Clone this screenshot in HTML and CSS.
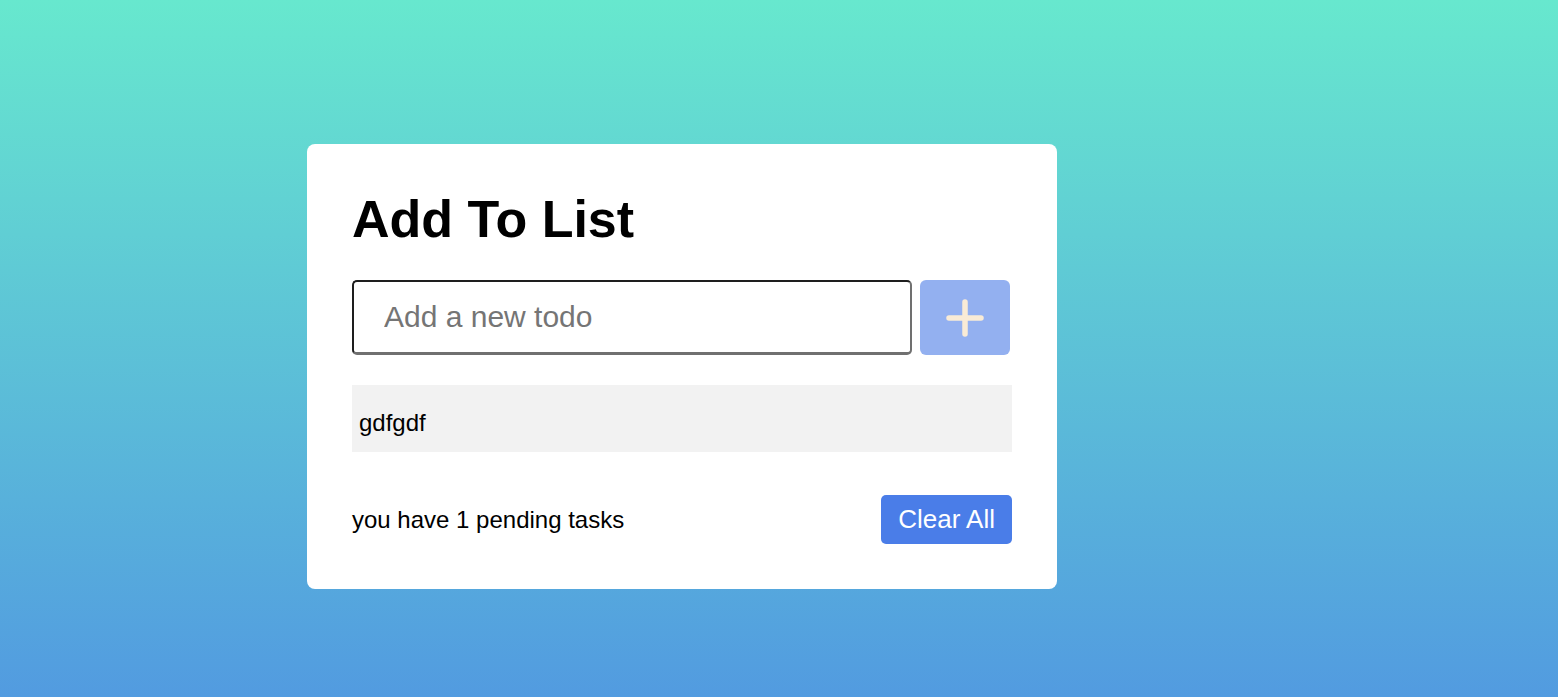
FILE: index.html
```html
<!DOCTYPE html>
<html lang="en">
<head>
<meta charset="utf-8">
<title>Todo</title>
<link rel="stylesheet" href="styles.css">
</head>
<body>
<div class="page">
  <div class="card">
    <h1 class="title">Add To List</h1>
    <div class="input-row">
      <input class="todo-input" type="text" placeholder="Add a new todo">
      <button class="add-btn" type="button" aria-label="Add">
        <svg width="40" height="40" viewBox="0 0 40 40"><path d="M20 4V36M4 20H36" stroke="#f9ebd6" stroke-width="5.5" stroke-linecap="round" fill="none"/></svg>
      </button>
    </div>
    <ul class="todo-list">
      <li class="todo-item">gdfgdf</li>
    </ul>
    <div class="footer">
      <span class="pending">you have 1 pending tasks</span>
      <button class="clear-btn" type="button">Clear All</button>
    </div>
  </div>
</div>
</body>
</html>
```

FILE: styles.css
```css
html, body {
  margin: 0;
  padding: 0;
  height: 100%;
}
body {
  font-family: "Liberation Sans", Arial, sans-serif;
  background: linear-gradient(to bottom, #67e8ce 0%, #529be0 100%);
  min-height: 697px;
  overflow: hidden;
}
.page {
  padding-top: 144px;
  padding-left: 307px;
}
.card {
  width: 660px;
  padding: 45px;
  background: #fff;
  border-radius: 8px;
}
.title {
  margin: 0;
  font-size: 52px;
  font-weight: 700;
  line-height: 60px;
  color: #000;
}
.input-row {
  display: flex;
  gap: 8px;
  margin-top: 31px;
}
.todo-input {
  box-sizing: border-box;
  width: 560px;
  height: 75px;
  border-width: 2px 2px 3px 2px;
  border-style: solid;
  border-top-color: #1e1e1e;
  border-left-color: #1e1e1e;
  border-right-color: #707070;
  border-bottom-color: #707070;
  border-radius: 5px;
  padding: 0 0 0 30px;
  font-family: "Liberation Sans", Arial, sans-serif;
  font-size: 30px;
  outline: none;
}
.todo-input::placeholder {
  color: #757575;
}
.add-btn {
  width: 90px;
  height: 75px;
  border: none;
  border-radius: 6px;
  background: #93b0f0;
  display: flex;
  align-items: center;
  justify-content: center;
  padding: 0;
}
.todo-list {
  list-style: none;
  margin: 30px 0 0;
  padding: 0;
}
.todo-item {
  height: 67px;
  line-height: 76px;
  background: #f2f2f2;
  padding: 0 7px;
  font-size: 24px;
  color: #000;
}
.footer {
  display: flex;
  justify-content: space-between;
  align-items: center;
  margin-top: 43px;
}
.pending {
  font-size: 24px;
  color: #000;
}
.clear-btn {
  height: 49px;
  padding: 0 17px;
  border: none;
  border-radius: 5px;
  background: #4a7de8;
  color: #fff;
  font-family: "Liberation Sans", Arial, sans-serif;
  font-size: 26px;
}
```
